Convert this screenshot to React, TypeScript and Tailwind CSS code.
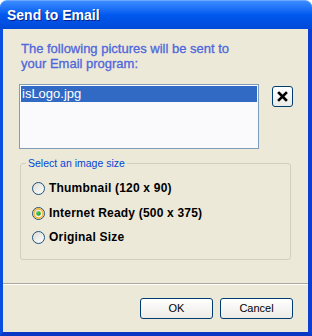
import React from 'react';

const font = { fontFamily: '"Liberation Sans", Arial, sans-serif' };

function Radio({ checked }: { checked?: boolean }) {
  return (
    <svg width="13" height="13" viewBox="0 0 13 13" className="shrink-0">
      <defs>
        <linearGradient id={checked ? 'rg1' : 'rg0'} x1="0" y1="0" x2="1" y2="1">
          <stop offset="0" stopColor="#dcdcd4" />
          <stop offset="1" stopColor="#ffffff" />
        </linearGradient>
        <radialGradient id="dot" cx="0.4" cy="0.4" r="0.6">
          <stop offset="0" stopColor="#55d451" />
          <stop offset="1" stopColor="#1a9a18" />
        </radialGradient>
      </defs>
      <circle cx="6.5" cy="6.5" r="6" fill={`url(#${checked ? 'rg1' : 'rg0'})`} stroke="#1c5180" strokeWidth="1" />
      {checked && (
        <>
          <circle cx="6.5" cy="6.5" r="4.6" fill="none" stroke="#f8b636" strokeWidth="1.6" />
          <circle cx="6.5" cy="6.5" r="2.3" fill="url(#dot)" />
        </>
      )}
    </svg>
  );
}

function Option({ label, checked }: { label: string; checked?: boolean }) {
  return (
    <div className="flex items-center gap-[4px] h-[13px]">
      <Radio checked={checked} />
      <span className="text-[12px] font-bold text-black leading-[13px] tracking-[0.2px]">{label}</span>
    </div>
  );
}

function XpButton({ children }: { children: React.ReactNode }) {
  return (
    <button className="w-[73px] h-[21px] rounded-[3px] border border-[#003c74] bg-gradient-to-b from-[#ffffff] to-[#ecebe6] text-[11px] text-black leading-none">
      {children}
    </button>
  );
}

export default function App() {
  return (
    <div className="w-[312px] h-[336px] bg-white" style={font}>
      <div className="w-full h-full flex flex-col">
        {/* Title bar */}
        <div className="h-[29px] shrink-0 rounded-t-[7px] bg-gradient-to-b from-[#3a8cff] via-[#0058ee] to-[#0049d8] flex items-center pl-[7px] border-t border-[#6aa8ff]">
          <span className="text-white text-[14px] font-bold [text-shadow:1px_1px_0_#0a1e8a]">Send to Email</span>
        </div>

        {/* Body */}
        <div className="flex-1 flex flex-col bg-[#ece9d8] border-l-[3px] border-r-[4px] border-b-[4px] border-l-[#0a4ee0] border-r-[#0a3fd0] border-b-[#0a38c4]">
          <p className="mt-[12px] ml-[18px] text-[13px] leading-[15px] text-[#4f66dc] [-webkit-text-stroke:0.3px_#4f66dc]">
            The following pictures will be sent to
            <br />
            your Email program:
          </p>

          <div className="mt-[13px] ml-[16px] flex items-start">
            <div className="w-[240px] h-[65px] border border-[#7f9db9] bg-[#fafafc] p-[1px]">
              <div className="h-[16px] bg-[#316ac5] text-white text-[13px] leading-[16px] pl-[1px]">isLogo.jpg</div>
            </div>
            <button className="ml-[13px] mt-[2px] w-[21px] h-[21px] rounded-[3px] border border-[#003c74] bg-gradient-to-b from-[#ffffff] to-[#ecebe6] flex items-center justify-center">
              <svg width="11" height="11" viewBox="0 0 11 11">
                <path d="M2 2 L9 9 M9 2 L2 9" stroke="#000" strokeWidth="2.6" strokeLinecap="square" />
              </svg>
            </button>
          </div>

          <fieldset className="mt-[8px] ml-[17px] w-[271px] h-[103px] border border-[#d0d0bf] rounded-[3px] px-[11px] pt-[12px]">
            <legend className="ml-[-6px] px-[2px] text-[10.5px] leading-[13px] text-[#0046d5]">Select an image size</legend>
            <div className="flex flex-col gap-[11.5px]">
              <Option label="Thumbnail (120 x 90)" />
              <Option label="Internet Ready (500 x 375)" checked />
              <Option label="Original Size" />
            </div>
          </fieldset>

          <div className="mt-[23px] h-[2px] border-t border-t-[#aca899] border-b border-b-white" />

          <div className="mt-[13px] flex justify-end gap-[7px] pr-[15px]">
            <XpButton>OK</XpButton>
            <XpButton>Cancel</XpButton>
          </div>
        </div>
      </div>
    </div>
  );
}
